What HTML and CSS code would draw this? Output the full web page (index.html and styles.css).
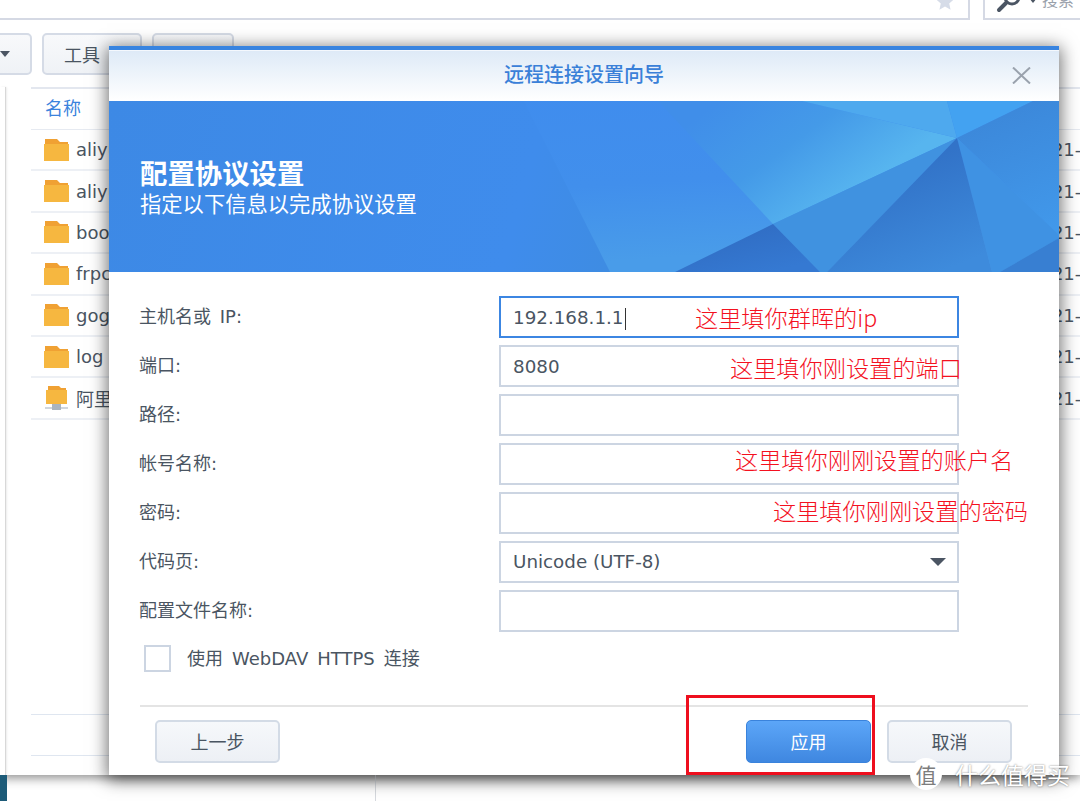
FILE: index.html
```html
<!DOCTYPE html>
<html lang="zh-CN">
<head>
<meta charset="utf-8">
<title>远程连接设置向导</title>
<link rel="stylesheet" href="styles.css">
</head>
<body>
<div class="desktop">
  <div class="backwin">
    <div class="topbar">
      <div class="address">
        <svg class="star" viewBox="0 0 18 17" width="18" height="17"><path d="M9 0l2.600 5.600 6.400.7-4.800 4.200 1.400 6.200L9 13.600 3.400 16.700l1.400-6.200L0 6.300l6.400-.7z"/></svg>
      </div>
      <div class="search">
        <svg class="lens" viewBox="0 0 28 26" width="28" height="26"><circle cx="16" cy="4" r="7" fill="none" stroke="#4b5563" stroke-width="3"/><path d="M10 10l-7 7" stroke="#4b5563" stroke-width="4" stroke-linecap="round"/></svg>
        <svg class="mini-caret" viewBox="0 0 8 5" width="8" height="5"><path d="M0 0h8L4 5z"/></svg>
        <span class="search-text">搜索</span>
      </div>
    </div>
    <div class="toolbar">
      <div class="tool tool-first"><svg viewBox="0 0 10 6" width="10" height="6"><path d="M0 0h10L5 6z"/></svg></div>
      <div class="tool tool-mid">工具</div>
      <div class="tool tool-last"></div>
    </div>
    <div class="content">
      <div class="strip"></div>
      <div class="table">
        <div class="thead">名称</div>
        <div class="row"><svg class="folder" viewBox="0 0 25 22"><path class="f-tab" d="M1 0h12l3 3h8v4H1z"/><path class="f-body" d="M0 5h25v17H0z"/></svg><span class="name">aliyun</span><span class="date">2021-03-12</span></div>
        <div class="row"><svg class="folder" viewBox="0 0 25 22"><path class="f-tab" d="M1 0h12l3 3h8v4H1z"/><path class="f-body" d="M0 5h25v17H0z"/></svg><span class="name">aliyunpan</span><span class="date">2021-03-12</span></div>
        <div class="row"><svg class="folder" viewBox="0 0 25 22"><path class="f-tab" d="M1 0h12l3 3h8v4H1z"/><path class="f-body" d="M0 5h25v17H0z"/></svg><span class="name">book</span><span class="date">2021-03-12</span></div>
        <div class="row"><svg class="folder" viewBox="0 0 25 22"><path class="f-tab" d="M1 0h12l3 3h8v4H1z"/><path class="f-body" d="M0 5h25v17H0z"/></svg><span class="name">frpc</span><span class="date">2021-03-12</span></div>
        <div class="row"><svg class="folder" viewBox="0 0 25 22"><path class="f-tab" d="M1 0h12l3 3h8v4H1z"/><path class="f-body" d="M0 5h25v17H0z"/></svg><span class="name">gogs</span><span class="date">2021-03-12</span></div>
        <div class="row"><svg class="folder" viewBox="0 0 25 22"><path class="f-tab" d="M1 0h12l3 3h8v4H1z"/><path class="f-body" d="M0 5h25v17H0z"/></svg><span class="name">log</span><span class="date">2021-03-12</span></div>
        <div class="row"><svg class="folder netfolder" viewBox="0 0 25 26"><path class="f-tab" d="M4 1h11l2 2h5v4H4z"/><path class="f-body" d="M2 5h21v14H2z"/><path d="M1 22h23v2H1z" fill="#d0d6dd"/><path d="M8 19h9v6H8z" fill="#a9b4bf"/></svg><span class="name">阿里云盘</span><span class="date">2021-03-12</span></div>
        <div class="foot-line first"></div>
        <div class="foot-line"></div>
      </div>
    </div>
  </div>
  <div class="under">
    <div class="teal"></div>
    <div class="under-line"></div>
  </div>

  <section class="dialog">
    <header class="dlg-head">
      <h1 class="dlg-title">远程连接设置向导</h1>
      <svg class="close" viewBox="0 0 19 17" width="19" height="17"><path d="M1 0.500L18 16.500M18 0.500L1 16.500" stroke="#9aa2ad" stroke-width="2" fill="none"/></svg>
    </header>
    <div class="banner">
      <svg class="banner-art" viewBox="109 101 950 171" preserveAspectRatio="none">
        <defs>
          <linearGradient id="g-base" x1="0" y1="0" x2="0.35" y2="1"><stop offset="0" stop-color="#3f8cee"/><stop offset="0.6" stop-color="#418fec"/><stop offset="1" stop-color="#499ce9"/></linearGradient>
          <linearGradient id="g-left" gradientUnits="userSpaceOnUse" x1="109" y1="101" x2="620" y2="240"><stop offset="0" stop-color="#3d89e5"/><stop offset="0.8" stop-color="#3f8cec"/><stop offset="1" stop-color="#3e8ce2"/></linearGradient>
          <linearGradient id="g-center" gradientUnits="userSpaceOnUse" x1="720" y1="101" x2="810" y2="225"><stop offset="0" stop-color="#408ee9"/><stop offset="0.5" stop-color="#449ae8"/><stop offset="1" stop-color="#57b5ef"/></linearGradient>
          <linearGradient id="g-dark" gradientUnits="userSpaceOnUse" x1="900" y1="170" x2="940" y2="272"><stop offset="0" stop-color="#3273c8"/><stop offset="1" stop-color="#3e8bdc"/></linearGradient>
          <linearGradient id="g-low" gradientUnits="userSpaceOnUse" x1="760" y1="230" x2="770" y2="272"><stop offset="0" stop-color="#316fc6"/><stop offset="1" stop-color="#3579d2"/></linearGradient>
          <linearGradient id="g-right" gradientUnits="userSpaceOnUse" x1="1000" y1="110" x2="1050" y2="230"><stop offset="0" stop-color="#3c88da"/><stop offset="1" stop-color="#4198ea"/></linearGradient>
        </defs>
        <rect x="109" y="101" width="950" height="171" fill="url(#g-base)"/>
        <polygon points="109,101 524,101 610,272 109,272" fill="url(#g-left)"/>
        <polygon points="658,101 802,101 957,138 773,224" fill="url(#g-center)"/>
        <polygon points="802,101 947,101 957,138" fill="#4ea9ee"/>
        <polygon points="947,101 1033,101 957,138" fill="#43a2f1"/>
        <polygon points="1033,101 1059,101 1059,235 957,138" fill="url(#g-right)"/>
        <polygon points="957,138 1059,235 1059,238 1000,272 992,272" fill="#3f92e3"/>
        <polygon points="1059,238 1059,272 1000,272" fill="#387fd2"/>
        <polygon points="957,138 773,224 820,272 827,272" fill="#4092e0"/>
        <polygon points="957,138 992,272 827,272" fill="url(#g-dark)"/>
        <polygon points="773,224 820,272 675,272" fill="url(#g-low)"/>
      </svg>
      <div class="banner-text">
        <h2 class="banner-title">配置协议设置</h2>
        <p class="banner-sub">指定以下信息以完成协议设置</p>
      </div>
    </div>
    <div class="form">
      <label class="flabel">主机名或 IP:</label>
      <div class="field focus"><span>192.168.1.1</span><i class="cursor"></i></div>
      <label class="flabel">端口:</label>
      <div class="field"><span>8080</span></div>
      <label class="flabel">路径:</label>
      <div class="field"></div>
      <label class="flabel">帐号名称:</label>
      <div class="field"></div>
      <label class="flabel">密码:</label>
      <div class="field"></div>
      <label class="flabel">代码页:</label>
      <div class="field select"><span>Unicode (UTF-8)</span><svg viewBox="0 0 16 8" width="16" height="8"><path d="M0 0h16L8 8z"/></svg></div>
      <label class="flabel">配置文件名称:</label>
      <div class="field"></div>
    </div>
    <div class="check-row"><span class="checkbox"></span><span class="check-text">使用 WebDAV HTTPS 连接</span></div>
    <div class="divider"></div>
    <footer class="dlg-foot">
      <div class="btn">上一步</div>
      <div class="btn primary">应用</div>
      <div class="btn">取消</div>
    </footer>
  </section>

  <div class="note note-1">这里填你群晖的ip</div>
  <div class="note note-2">这里填你刚设置的端口</div>
  <div class="note note-3">这里填你刚刚设置的账户名</div>
  <div class="note note-4">这里填你刚刚设置的密码</div>
  <div class="redbox"></div>

  <div class="watermark">
    <span class="wm-logo">值</span>
    <span class="wm-text">什么值得买</span>
  </div>
</div>
</body>
</html>
```

FILE: styles.css
```css
* { box-sizing: border-box; }
html, body { margin: 0; padding: 0; background: #fff; }
body { font-family: "DejaVu Sans", "Noto Sans CJK SC", sans-serif; color: #4a5562; font-size: 18px; }
h1, h2, p { margin: 0; font-weight: normal; }

.desktop { position: relative; width: 1080px; height: 801px; overflow: hidden; background: #fff; }

/* window behind the dialog */
.backwin { height: 775px; overflow: hidden; background: #fff; box-shadow: 0 3px 10px rgba(0,0,0,.45); display: flex; flex-direction: column; }
.topbar { display: flex; height: 20px; flex: none; }
.address { width: 970px; border-right: 2px solid #d5d9e4; border-bottom: 2px solid #d5d9e4; position: relative; overflow: hidden; }
.star { position: absolute; left: 936px; top: -7px; fill: #d6dce8; }
.search { margin-left: 13px; flex: 1; border-left: 2px solid #d5d9e4; border-bottom: 2px solid #d5d9e4; position: relative; overflow: hidden; }
.lens { position: absolute; left: 11px; top: -7px; }
.mini-caret { position: absolute; left: 44px; top: -2px; fill: #4b5563; }
.search-text { position: absolute; left: 57px; top: -13px; font-size: 16px; color: #9aa1ab; white-space: nowrap; }

.toolbar { display: flex; gap: 10px; margin-top: 13px; margin-left: -10px; flex: none; }
.tool { height: 42px; border: 2px solid #d5dbe6; border-radius: 5px; background: linear-gradient(#f8f9fb, #eff2f6); display: flex; align-items: center; justify-content: center; color: #4a5562; font-size: 18px; }
.tool-first { width: 42px; justify-content: flex-start; padding-left: 8px; }
.tool-first svg { fill: #4b5563; }
.tool-mid { width: 100px; padding-right: 20px; }
.tool-last { width: 82px; }

.content { display: flex; flex: 1; margin-top: 12px; min-height: 0; }
.strip { width: 6px; flex: none; border-right: 1px solid #d8d8d8; box-shadow: 1px 0 2px rgba(0,0,0,.08); }
.table { margin-left: 25px; flex: 1; min-width: 0; border-top: 2px solid #e3e7ef; overflow: hidden; }
.thead { height: 41px; display: flex; align-items: center; padding: 0 0 4px 14px; color: #3b83dd; font-size: 18px; border-bottom: 1px solid #e6eaf1; }
.row { height: 41.4px; display: grid; grid-template-columns: 45px 953px 80px; align-items: center; border-bottom: 2px solid #edf0f5; white-space: nowrap; font-size: 18px; }
.folder { width: 25px; height: 22px; margin-left: 13px; display: block; }
.netfolder { height: 26px; }
.f-tab { fill: #f0a133; }
.f-body { fill: #f6b740; }
.name { color: #4a5562; }
.date { color: #4a5562; overflow: hidden; }
.foot-line { height: 41px; border-bottom: 1px solid #dfe6f0; }
.foot-line.first { height: 1px; margin-top: 294px; }

.under { height: 26px; display: flex; position: relative; }
.teal { width: 7px; background: #1d5b78; }
.under-line { margin-left: 368px; width: 1px; background: #d6d9de; }

/* dialog */
.dialog { position: absolute; left: 109px; top: 46px; width: 950px; height: 729px; background: #fff; border-top: 4px solid #3884e0; box-shadow: 0 3px 16px 2px rgba(0,0,0,.55); display: flex; flex-direction: column; }
.dlg-head { height: 51px; flex: none; position: relative; border-top: 1px solid #f4f8fd; background: linear-gradient(#deeaf7, #ffffff); display: flex; align-items: center; justify-content: center; }
.dlg-title { font-size: 20px; line-height: 26px; color: #3a80d8; font-weight: 500; padding-bottom: 4px; font-family: "Noto Sans CJK SC", sans-serif; }
.close { position: absolute; right: 28px; top: 16px; }

.banner { height: 171px; flex: none; position: relative; color: #fff; }
.banner-art { position: absolute; inset: 0; width: 100%; height: 100%; display: block; }
.banner-text { position: relative; padding: 54px 0 0 31px; }
.banner-title { font-size: 27.400px; font-weight: 700; line-height: 34px; font-family: "Noto Sans CJK SC", sans-serif; }
.banner-sub { font-size: 21.300px; line-height: 27px; font-family: "Noto Sans CJK SC", sans-serif; }

.form { display: grid; grid-template-columns: 359px 460px; row-gap: 7px; padding: 24px 0 0 31px; flex: none; }
.flabel { height: 42px; display: flex; align-items: center; font-size: 18px; word-spacing: 3px; white-space: pre; padding-bottom: 4px; margin-left: -1px; }
.field { height: 42px; border: 2px solid #ccd5e2; padding-left: 12px; display: flex; align-items: center; font-size: 18.300px; background: #fff; }
.field.focus { border-color: #3c86e2; }
.cursor { display: block; width: 1px; height: 22px; background: #333; margin-left: 2px; margin-top: 3px; }
.select { justify-content: space-between; padding-right: 11px; padding-bottom: 2px; }
.select svg { fill: #4b5563; margin-top: 2px; }

.check-row { display: flex; align-items: center; margin: 13px 0 0 35px; flex: none; }
.checkbox { width: 27px; height: 27px; border: 2px solid #ccd5e2; background: #fff; flex: none; }
.check-text { margin: -4px 0 0 16px; font-size: 18px; word-spacing: 3.300px; white-space: nowrap; }
.divider { height: 2px; margin: 33px 31px 0 31px; background: #e4e4e4; flex: none; }
.dlg-foot { display: flex; gap: 16px; padding: 13px 47px 0 46px; flex: none; }
.btn { width: 125px; height: 43px; border: 2px solid #d3dbe6; border-radius: 5px; background: linear-gradient(#f6f8fb, #edf0f5); display: flex; align-items: center; justify-content: center; font-size: 18px; color: #4a5562; padding-bottom: 2px; }
.btn.primary { margin-left: auto; color: #fff; border: 1px solid #3a83dc; background: linear-gradient(#5ca6f8, #3f87e0); }

/* annotations drawn over the screenshot */
.note { position: absolute; color: #f4111f; font-size: 23.200px; line-height: 30px; white-space: nowrap; font-family: "Noto Sans CJK SC", sans-serif; font-weight: 300; }
.note-1 { left: 695px; top: 302px; }
.note-2 { left: 730px; top: 352px; }
.note-3 { left: 735px; top: 444px; }
.note-4 { left: 773px; top: 495px; }
.redbox { position: absolute; left: 686px; top: 695px; width: 189px; height: 80px; border: 3px solid #ee0f1e; }

.watermark { position: absolute; left: 910px; top: 758px; display: flex; align-items: center; gap: 13px; }
.wm-logo { width: 32px; height: 32px; border-radius: 50%; background: #fff; display: flex; align-items: center; justify-content: center; color: #7d7d7d; font-size: 21px; font-family: "Noto Sans CJK SC", sans-serif; }
.wm-text { color: #fff; font-size: 23px; line-height: 30px; white-space: nowrap; font-family: "Noto Sans CJK SC", sans-serif; text-shadow: 0 0 2px rgba(0,0,0,.55); }
```
